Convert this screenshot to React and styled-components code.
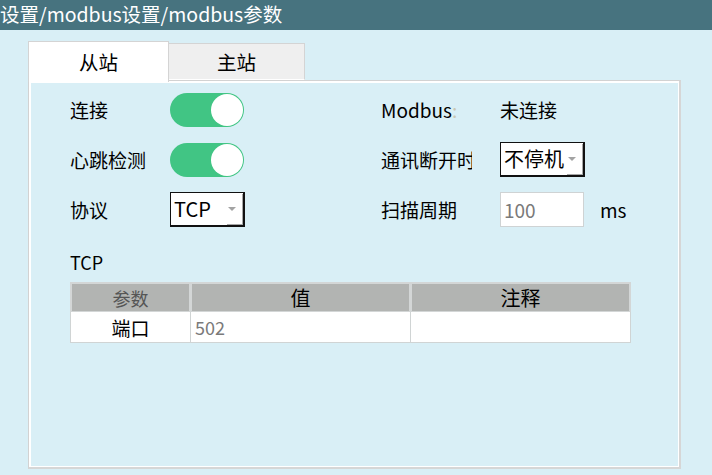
import React from "react";
import styled, { createGlobalStyle } from "styled-components";

const Global = createGlobalStyle`
  html, body { margin: 0; padding: 0; }
  body {
    background: #d9eff6;
    font-family: "Noto Sans CJK SC", "Noto Sans", sans-serif;
    color: #000;
    width: 712px;
    height: 475px;
    overflow: hidden;
  }
`;

const Page = styled.div`
  width: 712px;
  height: 475px;
  display: flex;
  flex-direction: column;
  background: #d9eff6;
`;

const TitleBar = styled.div`
  height: 30px;
  background: #47737f;
  color: #fff;
  font-size: 19.5px;
  line-height: 28px;
  white-space: nowrap;
  flex: none;
`;

const Main = styled.div`
  padding: 11px 31px 7px 28px;
  display: flex;
  flex-direction: column;
  flex: 1;
`;

const Tabs = styled.div`
  display: flex;
  align-items: flex-end;
  height: 39px;
  position: relative;
  z-index: 1;
`;

const Tab = styled.div`
  box-sizing: border-box;
  width: ${(p) => p.$w}px;
  height: ${(p) => (p.$active ? 41 : 37)}px;
  margin-bottom: ${(p) => (p.$active ? -2 : 0)}px;
  background: ${(p) => (p.$active ? "#fff" : "#efefef")};
  border: 1px solid #d4d4d4;
  border-bottom: ${(p) => (p.$active ? "none" : "1px solid #fff")};
  border-left: ${(p) => (p.$active ? "1px solid #d4d4d4" : "none")};
  font-size: 19.5px;
  display: flex;
  align-items: center;
  justify-content: center;
  padding-bottom: ${(p) => (p.$active ? 2 : 0)}px;
`;

const Panel = styled.div`
  box-sizing: border-box;
  height: 389px;
  border: 1px solid #d2d2d2;
  border-right: 2px solid #d6d6d6;
  border-bottom: 2px solid #d6d6d6;
  background: #fff;
  padding: 2px 1px 1px 2px;
  display: flex;
`;

const PanelInner = styled.div`
  flex: 1;
  background: #d9eff6;
  padding: 9px 0 0 39px;
  display: flex;
  flex-direction: column;
`;

const FormArea = styled.div`
  display: flex;
`;

const Column = styled.div`
  display: flex;
  flex-direction: column;
  gap: 15px;
  width: ${(p) => p.$w}px;
`;

const Row = styled.div`
  display: flex;
  align-items: center;
  height: 35px;
`;

const Label = styled.div`
  width: ${(p) => p.$w}px;
  font-size: 19px;
  white-space: nowrap;
  overflow: hidden;
  flex: none;
`;

const Colon = styled.span`
  color: #c9c7b4;
`;

const Value = styled.div`
  font-size: 19px;
`;

const Toggle = styled.div`
  box-sizing: border-box;
  width: 74px;
  height: 34px;
  border-radius: 17px;
  background: #41c584;
  position: relative;
  &::after {
    content: "";
    position: absolute;
    right: 1px;
    top: 1px;
    width: 32px;
    height: 32px;
    border-radius: 50%;
    background: #fff;
  }
`;

const Combo = styled.div`
  box-sizing: border-box;
  width: ${(p) => p.$w}px;
  height: 35px;
  margin-left: ${(p) => p.$ml || 0}px;
  background: #fff;
  border: 1px solid #111;
  border-right-width: 2px;
  border-bottom-width: 2px;
  position: relative;
  font-size: 20px;
  line-height: 31px;
  padding-left: 3px;
  &::after {
    content: "";
    position: absolute;
    right: 0;
    bottom: 0;
    width: 16px;
    height: 31px;
    box-sizing: border-box;
    border-right: 1px solid #a6a6a6;
    border-bottom: 1px solid #a6a6a6;
  }
`;

const Arrow = styled.span`
  position: absolute;
  right: 7px;
  top: 14px;
  width: 0;
  height: 0;
  border-left: 4px solid transparent;
  border-right: 4px solid transparent;
  border-top: 4px solid #a3a3a3;
`;

const TextBox = styled.div`
  box-sizing: border-box;
  width: 84px;
  height: 35px;
  background: #fff;
  border: 1px solid #cfd3d4;
  color: #7a7a7a;
  font-size: 19px;
  line-height: 33px;
  padding-left: 3px;
`;

const Unit = styled.div`
  font-size: 19px;
  margin-left: 16px;
`;

const SectionTitle = styled.div`
  font-size: 18px;
  margin-top: 23px;
  height: 24px;
  line-height: 24px;
`;

const Table = styled.div`
  margin-top: 8px;
  width: 560px;
  display: grid;
  grid-template-columns: 120px 220px 220px;
  grid-auto-rows: 30px;
`;

const Cell = styled.div`
  box-sizing: border-box;
  margin: 0 -1px -1px 0;
  background: ${(p) => (p.$head ? "#b2b4b2" : "#fff")};
  color: ${(p) => p.$color || "#000"};
  font-size: ${(p) => p.$size || 20}px;
  display: flex;
  align-items: center;
  justify-content: ${(p) => (p.$left ? "flex-start" : "center")};
  padding-left: ${(p) => (p.$left ? 4 : 0)}px;
  border-style: solid;
  border-color: ${(p) => (p.$head ? "#d3d6d6" : "#d0d4d4")};
  border-width: ${(p) => (p.$head ? "2px" : "0 1px 1px 1px")};
`;

export default function App() {
  return (
    <Page>
      <Global />
      <TitleBar>设置/modbus设置/modbus参数</TitleBar>
      <Main>
        <Tabs>
          <Tab $active $w={141}>从站</Tab>
          <Tab $w={136}>主站</Tab>
        </Tabs>
        <Panel>
          <PanelInner>
            <FormArea>
              <Column $w={311}>
                <Row>
                  <Label $w={100}>连接</Label>
                  <Toggle />
                </Row>
                <Row>
                  <Label $w={100}>心跳检测</Label>
                  <Toggle />
                </Row>
                <Row>
                  <Label $w={100}>协议</Label>
                  <Combo $w={75}>
                    TCP
                    <Arrow />
                  </Combo>
                </Row>
              </Column>
              <Column $w={280}>
                <Row>
                  <Label $w={119}>
                    Modbus<Colon>:</Colon>
                  </Label>
                  <Value>未连接</Value>
                </Row>
                <Row>
                  <Label $w={91}>通讯断开时</Label>
                  <Combo $w={85} $ml={28}>
                    不停机
                    <Arrow />
                  </Combo>
                </Row>
                <Row>
                  <Label $w={119}>扫描周期</Label>
                  <TextBox>100</TextBox>
                  <Unit>ms</Unit>
                </Row>
              </Column>
            </FormArea>
            <SectionTitle>TCP</SectionTitle>
            <Table>
              <Cell $head $color="#555" $size={18}>参数</Cell>
              <Cell $head>值</Cell>
              <Cell $head>注释</Cell>
              <Cell $size={19}>端口</Cell>
              <Cell $left $color="#7a7a7a" $size={18}>502</Cell>
              <Cell />
            </Table>
          </PanelInner>
        </Panel>
      </Main>
    </Page>
  );
}
